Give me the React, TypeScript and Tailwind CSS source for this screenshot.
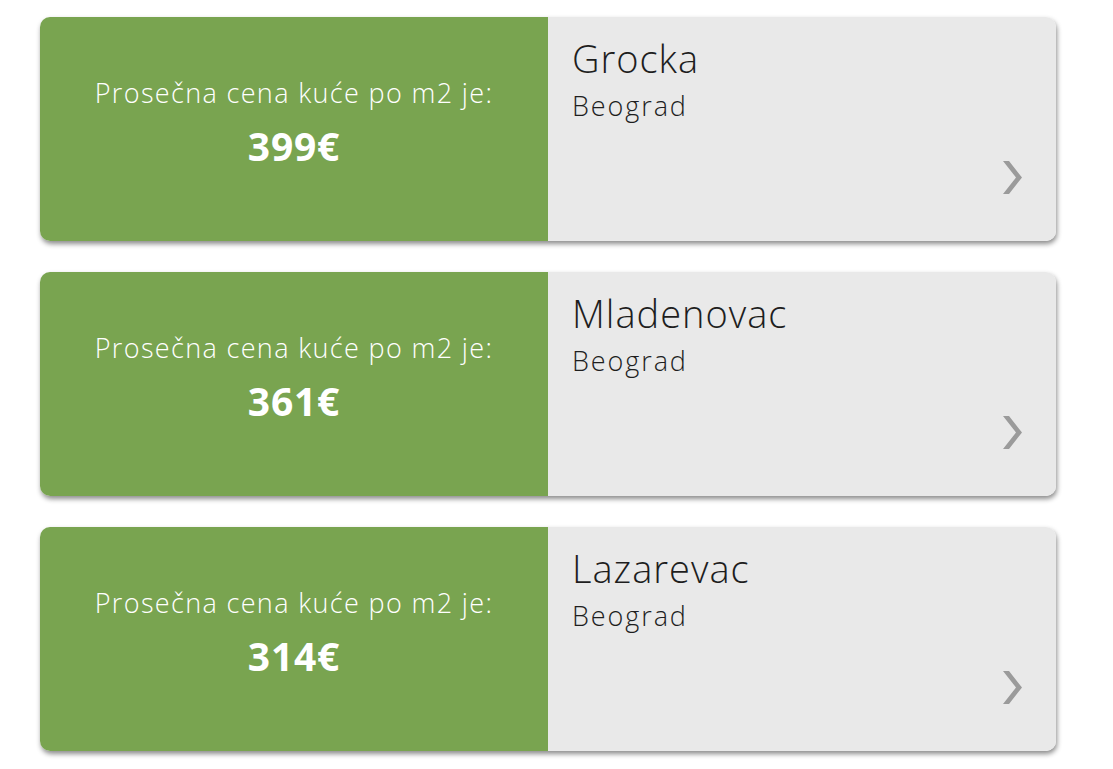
import React from "react";

const cities = [
  { name: "Grocka", region: "Beograd", price: "399€" },
  { name: "Mladenovac", region: "Beograd", price: "361€" },
  { name: "Lazarevac", region: "Beograd", price: "314€" },
];

function Chevron() {
  return (
    <svg width="19" height="33" viewBox="0 0 19 33" className="block">
      <polygon points="0,0 6,0 19,16.5 6,33 0,33 13,16.5" fill="#9b9b9b" />
    </svg>
  );
}

function CityCard({ name, region, price }: { name: string; region: string; price: string }) {
  return (
    <div className="flex h-[224px] w-[1016px] overflow-hidden rounded-[10px] shadow-[1px_3px_5px_rgba(0,0,0,0.45)]">
      <div className="flex w-[508px] shrink-0 flex-col items-center bg-[#79a450] pt-[60px] text-white">
        <p className="text-[27px] font-light leading-[32px] tracking-[1.35px]">Prosečna cena kuće po m2 je:</p>
        <p className="mt-[15px] text-[39px] font-bold leading-[44px] tracking-[0.8px]">{price}</p>
      </div>
      <div className="flex flex-1 flex-col bg-[#e9e9e9] px-[24px] pt-[19px] pb-[47px] text-[#1e1e1e]">
        <p className="text-[38px] font-light leading-[44px] tracking-[1px]">{name}</p>
        <p className="mt-[10px] text-[27px] font-light leading-[32px] tracking-[1.9px]">{region}</p>
        <div className="mt-auto flex justify-end pr-[10px]">
          <Chevron />
        </div>
      </div>
    </div>
  );
}

export default function App() {
  return (
    <div
      className="min-h-screen bg-white pl-[40px] pt-[17px]"
      style={{ fontFamily: '"Open Sans", "DejaVu Sans", sans-serif' }}
    >
      <div className="flex flex-col gap-[31px]">
        {cities.map((c) => (
          <CityCard key={c.name} {...c} />
        ))}
      </div>
    </div>
  );
}
